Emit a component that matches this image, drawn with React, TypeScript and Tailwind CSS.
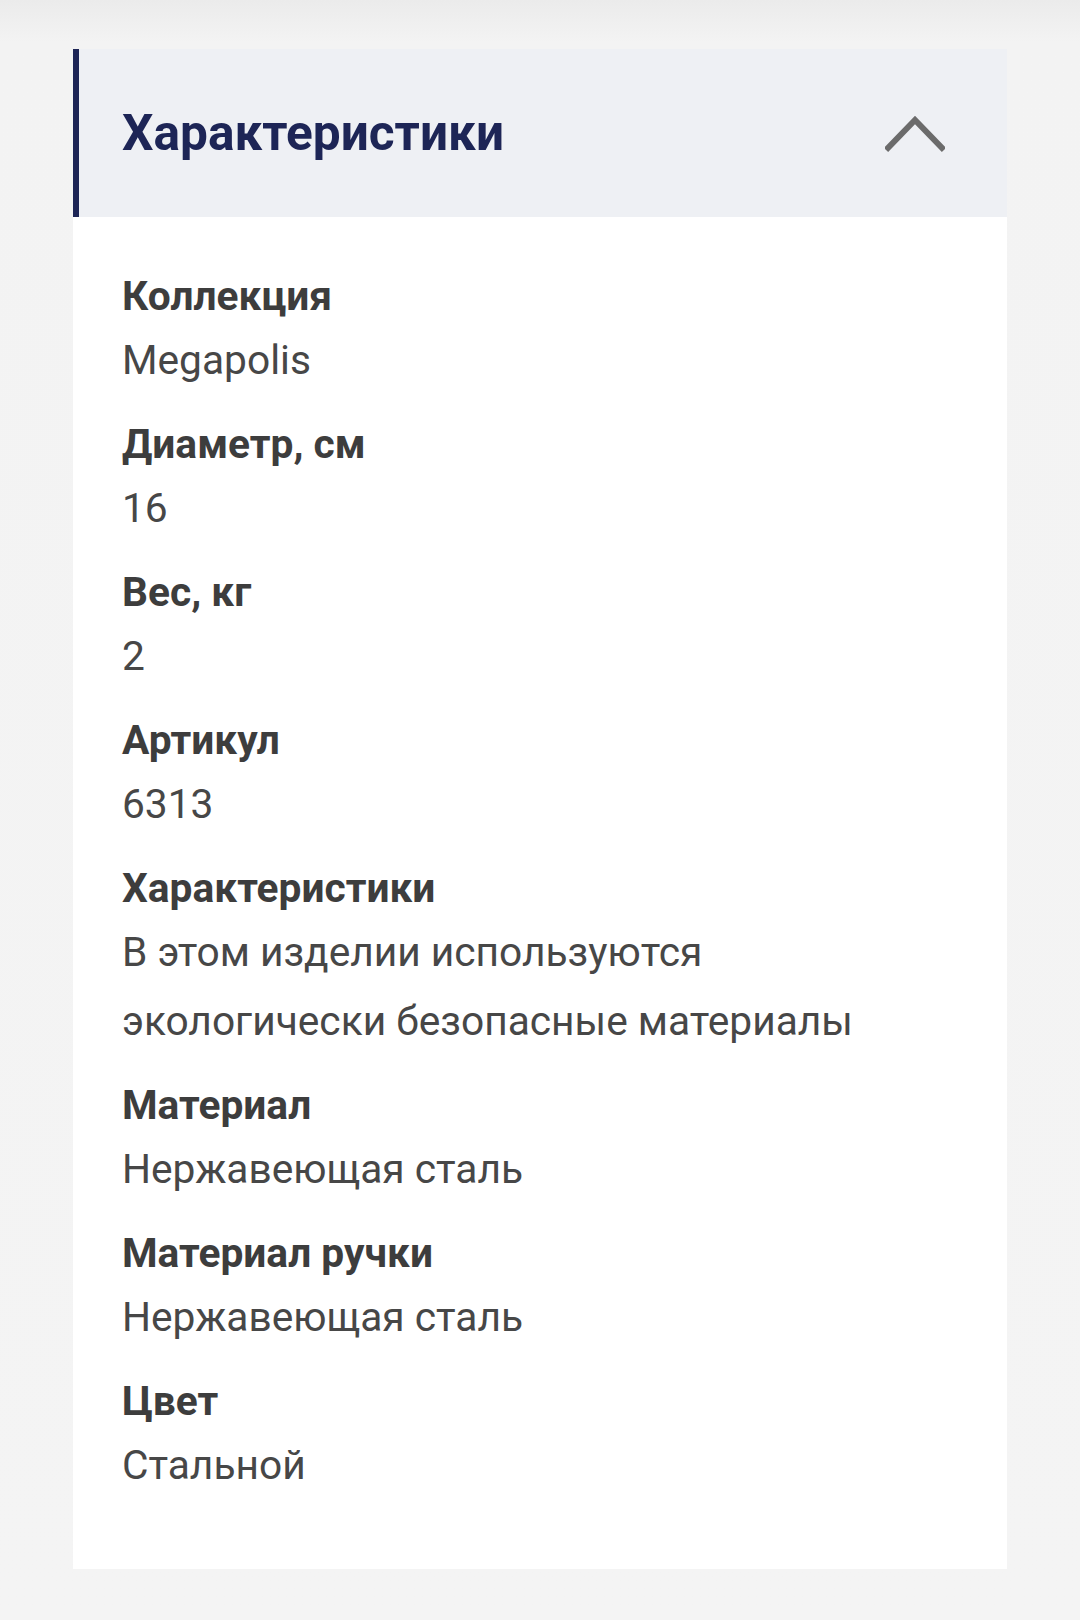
const specs = [
  { label: 'Коллекция', value: ['Megapolis'] },
  { label: 'Диаметр, см', value: ['16'] },
  { label: 'Вес, кг', value: ['2'] },
  { label: 'Артикул', value: ['6313'] },
  { label: 'Характеристики', value: ['В этом изделии используются', 'экологически безопасные материалы'] },
  { label: 'Материал', value: ['Нержавеющая сталь'] },
  { label: 'Материал ручки', value: ['Нержавеющая сталь'] },
  { label: 'Цвет', value: ['Стальной'] },
];

export default function App() {
  return (
    <div
      className="min-h-[1620px] w-[1080px] bg-[linear-gradient(to_bottom,#ebebeb_0px,#f3f3f3_42px,#f4f4f4_100%)] px-[73px] pt-[49px]"
      style={{ fontFamily: 'Roboto, "Noto Sans", sans-serif' }}
    >
      <div className="bg-white">
        {/* Accordion header */}
        <div className="flex h-[168px] items-center justify-between border-l-[6px] border-[#1d2556] bg-[#eef0f4] pl-[43px] pr-[62px]">
          <h2 className="text-[49.6px] font-bold leading-[58px] text-[#1d2556]">Характеристики</h2>
          <svg width="60" height="38" viewBox="0 0 60 38" className="mt-[2px]">
            <polyline points="1,35 30,5 59,35" fill="none" stroke="#6b6b6b" strokeWidth="6" />
          </svg>
        </div>

        {/* Specs list */}
        <div className="flex flex-col gap-[25px] pb-[69px] pl-[49px] pr-[40px] pt-[55px]">
          {specs.map((s) => (
            <div key={s.label}>
              <p className="text-[40.7px] font-bold leading-[48px] text-[#3d3d3d]">{s.label}</p>
              <p className="mt-[6px] text-[40.7px] leading-[69px] text-[#474747]">
                {s.value.map((line, i) => (
                  <span key={i} className="block">{line}</span>
                ))}
              </p>
            </div>
          ))}
        </div>
      </div>
    </div>
  );
}
